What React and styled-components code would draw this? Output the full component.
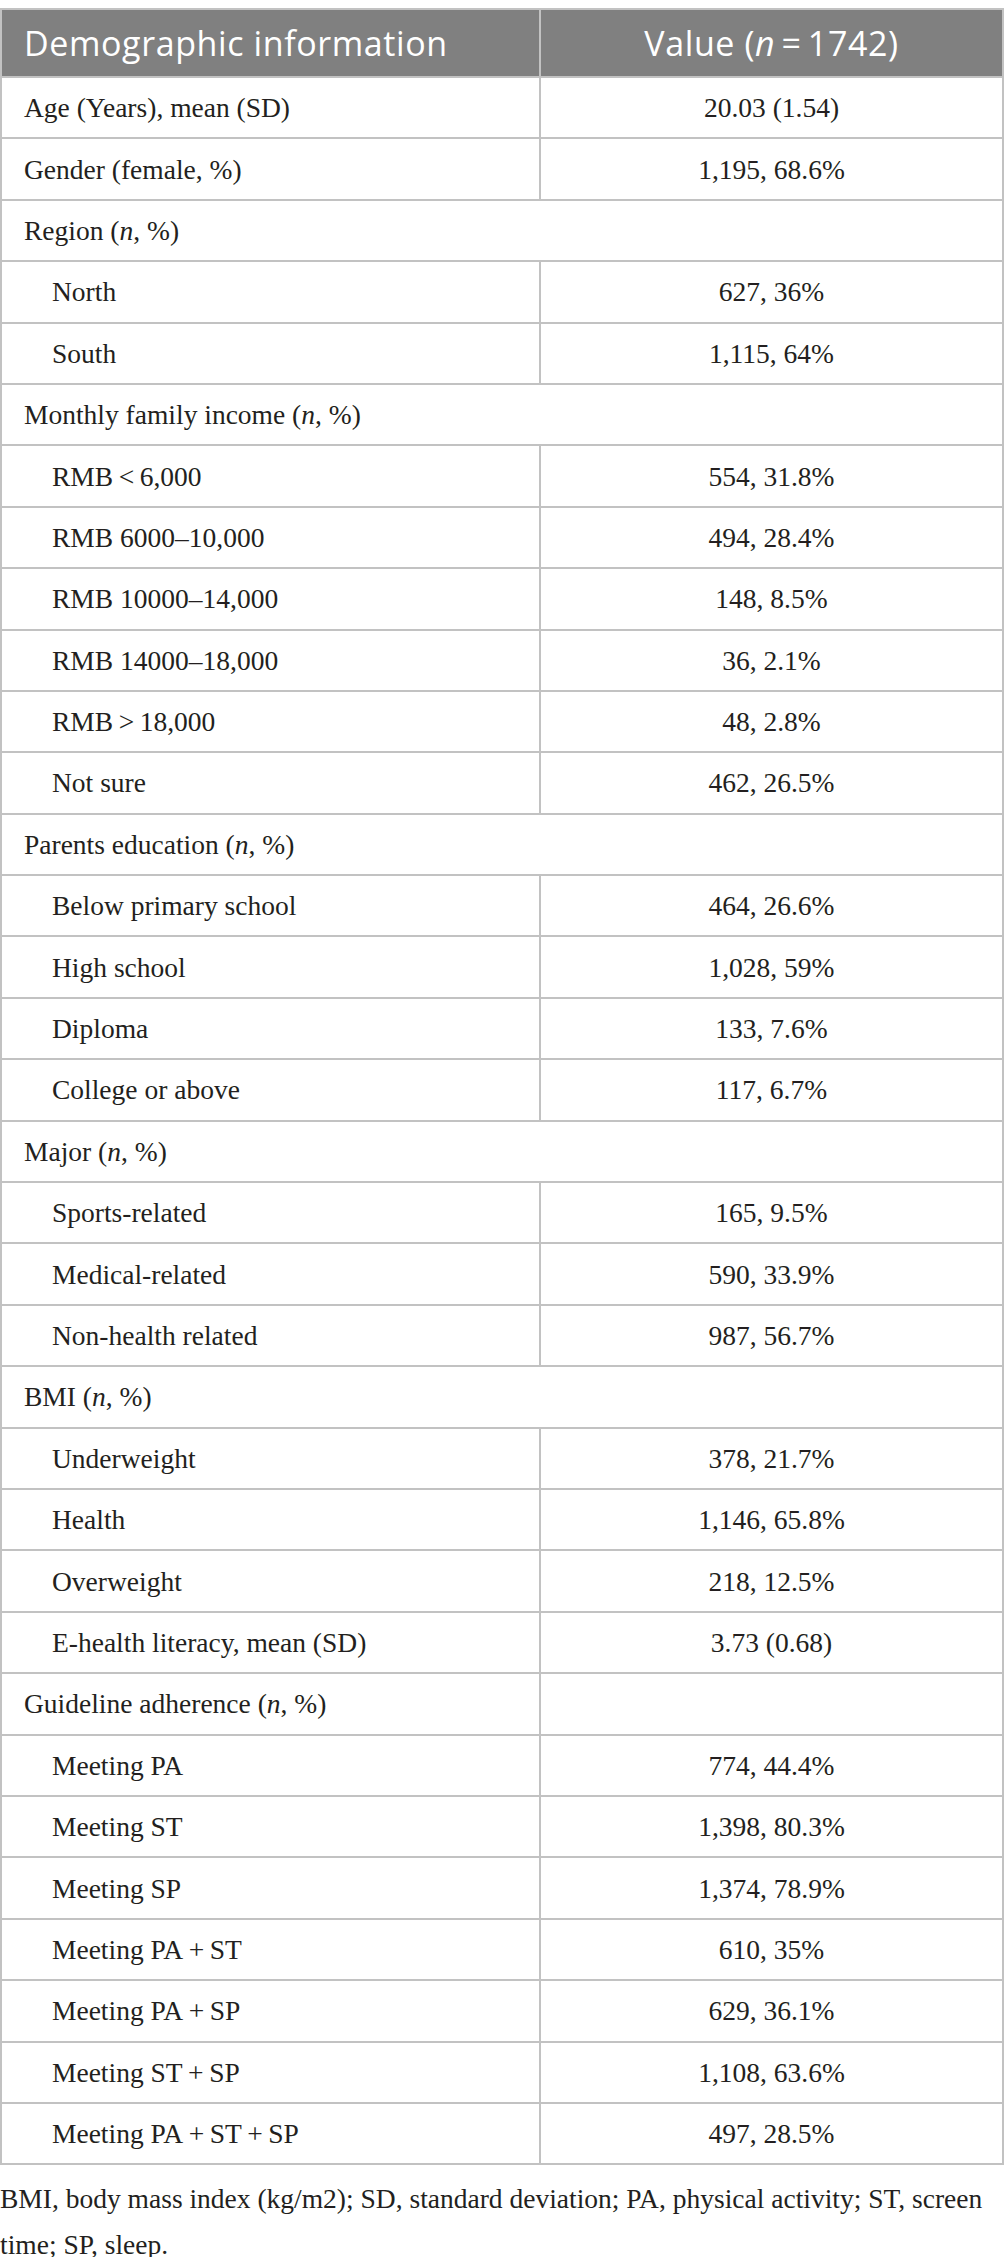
import React from 'react';
import styled, { createGlobalStyle } from 'styled-components';

const GlobalStyle = createGlobalStyle`
  body {
    margin: 0;
    padding: 8px 0 0 0;
    background: #fff;
    font-family: "Liberation Serif", "Times New Roman", serif;
    color: #231f20;
  }
`;

const Wrap = styled.div`
  width: 1004px;
`;

const Table = styled.table`
  width: 1004px;
  border-collapse: collapse;
  table-layout: fixed;
  border: 2px solid #c2c2c2;
`;

const HeadCell = styled.th`
  height: 66px;
  padding: 0 22px;
  background: #808080;
  color: #fff;
  font-family: "Open Sans", "Noto Sans", sans-serif;
  font-weight: 400;
  font-size: 34px;
  letter-spacing: 0.6px;
  text-align: ${p => (p.$center ? 'center' : 'left')};
  border: 2px solid #c2c2c2;
  border-top: none;
  border-bottom: none;
  &:first-child { border-left: none; }
  &:last-child { border-right: none; }
  i { font-style: italic; }
`;

const Cell = styled.td`
  height: 59.4px;
  padding: 0 0 0 ${p => (p.$sub ? '50px' : '22px')};
  font-size: 27.5px;
  line-height: 1.2;
  text-align: left;
  border: 2px solid #c2c2c2;
  vertical-align: middle;
  i { font-style: italic; }
`;

const ValueCell = styled(Cell)`
  padding: 0;
  text-align: center;
`;

const Note = styled.p`
  margin: 11px 0 0 0;
  font-size: 27.5px;
  line-height: 46px;
`;

const rows = [
  { label: 'Age (Years), mean (SD)', value: '20.03 (1.54)' },
  { label: 'Gender (female, %)', value: '1,195, 68.6%' },
  { group: <>Region (<i>n</i>, %)</> },
  { label: 'North', value: '627, 36%', sub: true },
  { label: 'South', value: '1,115, 64%', sub: true },
  { group: <>Monthly family income (<i>n</i>, %)</> },
  { label: 'RMB\u2009<\u20096,000', value: '554, 31.8%', sub: true },
  { label: 'RMB 6000–10,000', value: '494, 28.4%', sub: true },
  { label: 'RMB 10000–14,000', value: '148, 8.5%', sub: true },
  { label: 'RMB 14000–18,000', value: '36, 2.1%', sub: true },
  { label: 'RMB\u2009>\u200918,000', value: '48, 2.8%', sub: true },
  { label: 'Not sure', value: '462, 26.5%', sub: true },
  { group: <>Parents education (<i>n</i>, %)</> },
  { label: 'Below primary school', value: '464, 26.6%', sub: true },
  { label: 'High school', value: '1,028, 59%', sub: true },
  { label: 'Diploma', value: '133, 7.6%', sub: true },
  { label: 'College or above', value: '117, 6.7%', sub: true },
  { group: <>Major (<i>n</i>, %)</> },
  { label: 'Sports-related', value: '165, 9.5%', sub: true },
  { label: 'Medical-related', value: '590, 33.9%', sub: true },
  { label: 'Non-health related', value: '987, 56.7%', sub: true },
  { group: <>BMI (<i>n</i>, %)</> },
  { label: 'Underweight', value: '378, 21.7%', sub: true },
  { label: 'Health', value: '1,146, 65.8%', sub: true },
  { label: 'Overweight', value: '218, 12.5%', sub: true },
  { label: 'E-health literacy, mean (SD)', value: '3.73 (0.68)', sub: true },
  { label: <>Guideline adherence (<i>n</i>, %)</>, value: '' },
  { label: 'Meeting PA', value: '774, 44.4%', sub: true },
  { label: 'Meeting ST', value: '1,398, 80.3%', sub: true },
  { label: 'Meeting SP', value: '1,374, 78.9%', sub: true },
  { label: 'Meeting PA\u2009+\u2009ST', value: '610, 35%', sub: true },
  { label: 'Meeting PA\u2009+\u2009SP', value: '629, 36.1%', sub: true },
  { label: 'Meeting ST\u2009+\u2009SP', value: '1,108, 63.6%', sub: true },
  { label: 'Meeting PA\u2009+\u2009ST\u2009+\u2009SP', value: '497, 28.5%', sub: true },
];

const App = () => {
  return (
    <Wrap>
      <GlobalStyle />
      <Table>
        <colgroup>
          <col style={{ width: '539px' }} />
          <col />
        </colgroup>
        <thead>
          <tr>
            <HeadCell>Demographic information</HeadCell>
            <HeadCell $center>Value (<i>n</i>&thinsp;=&thinsp;1742)</HeadCell>
          </tr>
        </thead>
        <tbody>
          {rows.map((r, i) =>
            r.group ? (
              <tr key={i}>
                <Cell colSpan={2}>{r.group}</Cell>
              </tr>
            ) : (
              <tr key={i}>
                <Cell $sub={r.sub}>{r.label}</Cell>
                <ValueCell>{r.value}</ValueCell>
              </tr>
            )
          )}
        </tbody>
      </Table>
      <Note>
        BMI, body mass index (kg/m2); SD, standard deviation; PA, physical activity; ST, screen time; SP, sleep.
      </Note>
    </Wrap>
  );
};

export default App;
